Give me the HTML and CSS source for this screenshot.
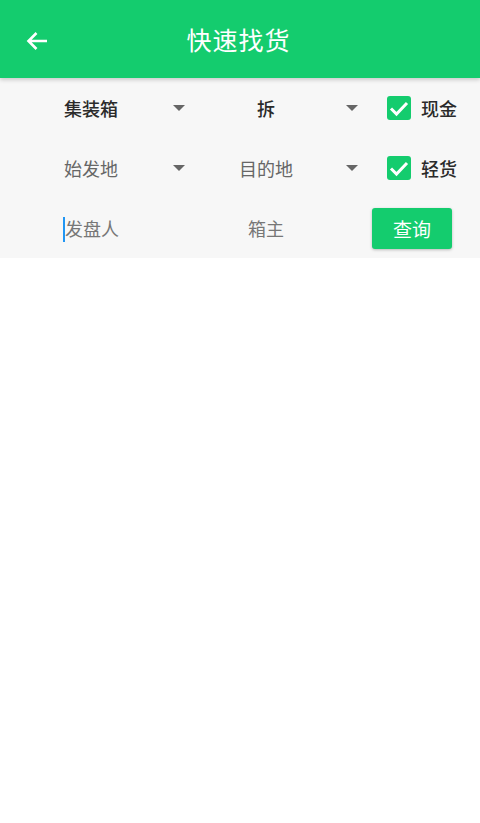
FILE: index.html
```html
<!DOCTYPE html>
<html>
    <head>
        <meta charset="utf-8">
        <meta name="viewport" content="width=device-width" />
        <link rel="stylesheet" href="styles.css">
    </head>
    <body>
        <div class="q-bar">
            <svg class="q-back" width="22" height="20" viewBox="0 0 22 20">
                <path d="M21 10H2.5M10.5 2L2.5 10L10.5 18" fill="none" stroke="#fff" stroke-width="2.6"/>
            </svg>
            <div class="q-title">快速找货</div>
        </div>
        <div class="q-panel">
            <div class="q-row">
                <div class="q-spin q-left q-dark"><span class="q-val">集装箱</span><i class="q-caret"></i></div>
                <div class="q-spin q-mid q-dark"><span class="q-val">拆</span><i class="q-caret"></i></div>
                <label class="q-check">
                    <span class="q-box"><svg width="24" height="24" viewBox="0 0 24 24"><path d="M4 12.5l5.5 5.5 10.5-11" fill="none" stroke="#fff" stroke-width="3"/></svg></span>
                    现金
                </label>
            </div>
            <div class="q-row">
                <div class="q-spin q-left"><span class="q-val">始发地</span><i class="q-caret"></i></div>
                <div class="q-spin q-mid"><span class="q-val">目的地</span><i class="q-caret"></i></div>
                <label class="q-check">
                    <span class="q-box"><svg width="24" height="24" viewBox="0 0 24 24"><path d="M4 12.5l5.5 5.5 10.5-11" fill="none" stroke="#fff" stroke-width="3"/></svg></span>
                    轻货
                </label>
            </div>
            <div class="q-row">
                <div class="q-field q-left"><span class="q-cursor"></span>发盘人</div>
                <div class="q-field q-mid">箱主</div>
                <div class="q-act"><button class="q-btn">查询</button></div>
            </div>
        </div>
    </body>
</html>
```

FILE: styles.css
```css
*{box-sizing: border-box;}
html, body {height: 100%;}
body {margin: 0; background: #fff; font-family: "Noto Sans CJK SC", "Noto Sans", sans-serif;}

/* top bar */
.q-bar {height: 78px; background: #14cc6e; display: grid; grid-template-columns: 1fr auto 1fr; align-items: center;
    box-shadow: 0 2px 4px rgba(0,0,0,.18); position: relative; z-index: 1;}
.q-back {margin: 4px 0 0 26px;}
.q-title {color: #fff; font-size: 25px; letter-spacing: 1px; margin-left: -3px;}

/* filter panel */
.q-panel {background: #f7f7f7;}
.q-row {display: flex; height: 60px; align-items: center;}
.q-left {width: 193px; padding-left: 64px;}
.q-mid {width: 173px;}
.q-spin {display: flex; align-items: center; height: 100%; padding-right: 8px; font-size: 18px; color: #666;}
.q-left .q-val {flex: 1;}
.q-mid .q-val {flex: 1; text-align: center; margin-right: 7px;}
.q-dark {color: #2a2a2a; font-weight: 500;}
.q-caret {width: 0; height: 0; border-left: 6.5px solid transparent; border-right: 6.5px solid transparent; border-top: 6px solid #666;}

.q-check {display: flex; align-items: center; padding-left: 21px; font-size: 18px; color: #2a2a2a; font-weight: 500;}
.q-box {width: 24px; height: 24px; border-radius: 3px; background: #14cc6e; margin-right: 10px;}
.q-box svg {display: block;}

.q-field {display: flex; align-items: center; height: 100%; font-size: 18px; color: #777;}
.q-field.q-left {padding-left: 63px;}
.q-field.q-mid {justify-content: center; padding-right: 27px;}
.q-cursor {width: 2px; height: 25px; background: #2196f3; margin-top: 2px;}
.q-act {padding-left: 6px;}
.q-btn {width: 80px; height: 41px; border: 0; border-radius: 3px; background: #14cc6e; color: #fff; font-family: inherit;
    font-size: 19px; box-shadow: 0 1px 3px rgba(0,0,0,.25); margin-top: 1px;}
```
